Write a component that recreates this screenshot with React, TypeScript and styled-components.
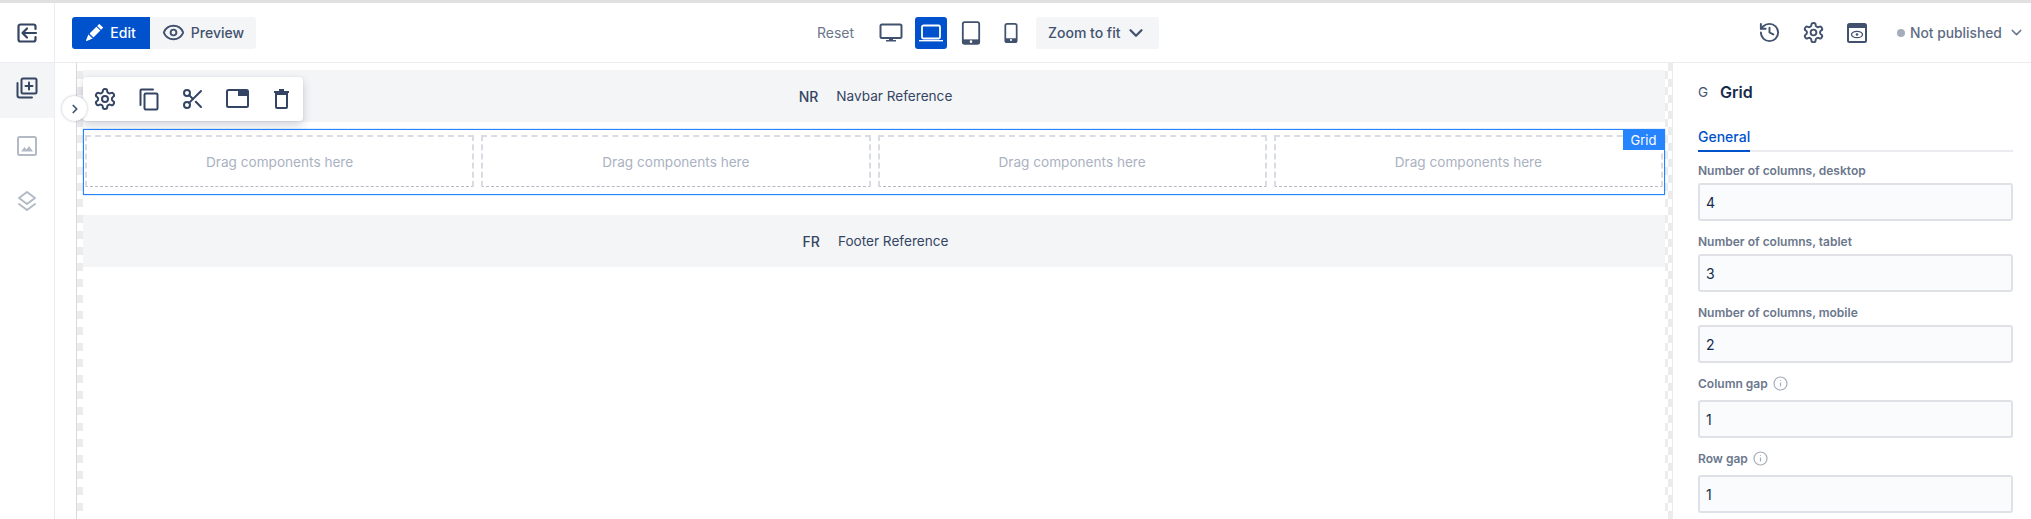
import { ReactNode } from "react";
import styled, { createGlobalStyle } from "styled-components";
import { BsPencilFill } from "react-icons/bs";
import { LuEye, LuHistory, LuScissors, LuSettings } from "react-icons/lu";
import { FiChevronDown, FiChevronRight } from "react-icons/fi";

const GlobalStyle = createGlobalStyle`
  html, body { margin: 0; padding: 0; height: 100%; background: #fff; overflow: hidden; }
  * { box-sizing: border-box; }
  body { font-family: Inter, "Liberation Sans", sans-serif; color: #344563; font-size: 14px; }
`;

const Page = styled.div`
  width: 2031px;
  height: 519px;
  display: flex;
  flex-direction: column;
  overflow: hidden;
  border-top: 3px solid #e0e0e0;
`;

const Body = styled.div`
  flex: 1;
  display: flex;
  min-height: 0;
`;

const Sidebar = styled.nav`
  width: 55px;
  flex-shrink: 0;
  border-right: 1px solid #ebecf0;
  display: flex;
  flex-direction: column;
`;

const SideItem = styled.div<{ $active?: boolean; $muted?: boolean; $tall?: boolean }>`
  height: ${(p) => (p.$tall ? "60px" : "55px")};
  display: flex;
  align-items: center;
  justify-content: center;
  padding-bottom: ${(p) => (p.$active ? "5px" : "0")};
  background: ${(p) => (p.$active ? "#f4f5f7" : "transparent")};
  color: ${(p) => (p.$muted ? "#b3bac5" : "#344563")};
  border-bottom: ${(p) => (p.$tall ? "1px solid #ebecf0" : "none")};
`;

const Main = styled.div`
  flex: 1;
  min-width: 0;
  display: flex;
  flex-direction: column;
`;

const Toolbar = styled.header`
  height: 60px;
  flex-shrink: 0;
  display: flex;
  align-items: center;
  padding-left: 17px;
  border-bottom: 1px solid #ebecf0;
  > * {
    flex-shrink: 0;
  }
`;

const ModeGroup = styled.div`
  display: flex;
  width: 184px;
  height: 32px;
  background: #f4f5f7;
  border-radius: 3px;
  overflow: hidden;
`;

const ModeButton = styled.div<{ $active?: boolean }>`
  width: ${(p) => (p.$active ? "78px" : "106px")};
  display: flex;
  align-items: center;
  justify-content: center;
  gap: ${(p) => (p.$active ? "7px" : "6px")};
  font-weight: 500;
  font-size: 14px;
  background: ${(p) => (p.$active ? "#0052cc" : "transparent")};
  color: ${(p) => (p.$active ? "#fff" : "#42526e")};
`;

const CenterGroup = styled.div`
  display: flex;
  align-items: center;
  margin-left: 561px;
`;

const ResetLabel = styled.span`
  color: #6b778c;
  font-size: 14px;
  width: 50px;
  margin-right: 8px;
`;

const DeviceButton = styled.div<{ $active?: boolean }>`
  width: 32px;
  height: 32px;
  margin-right: 8px;
  display: flex;
  align-items: center;
  justify-content: center;
  border-radius: 3px;
  background: ${(p) => (p.$active ? "#0052cc" : "transparent")};
  color: ${(p) => (p.$active ? "#fff" : "#42526e")};
`;

const ZoomSelect = styled.div`
  width: 123px;
  height: 32px;
  margin-left: 1px;
  background: #f4f5f7;
  border-radius: 3px;
  display: flex;
  align-items: center;
  gap: 4px;
  padding-left: 12px;
  font-weight: 500;
  color: #42526e;
`;

const RightGroup = styled.div`
  display: flex;
  align-items: center;
  margin-left: 588px;
  color: #42526e;
`;

const ToolIcon = styled.span`
  width: 44px;
  display: flex;
  align-items: center;
  justify-content: center;
`;

const StatusDot = styled.span`
  width: 8px;
  height: 8px;
  border-radius: 50%;
  background: #a5adba;
  margin: 0 5px 0 18px;
`;

const StatusText = styled.span`
  font-weight: 500;
  font-size: 13.8px;
  color: #5e6c84;
  margin-right: 6px;
  white-space: nowrap;
`;

const Workspace = styled.div`
  flex: 1;
  min-height: 0;
  display: flex;
`;

const Gutter = styled.div`
  width: 21px;
  flex-shrink: 0;
`;

const CanvasFrame = styled.div`
  position: relative;
  width: 1596px;
  flex-shrink: 0;
  padding: 0 7px;
  display: flex;
  flex-direction: column;
  box-shadow: inset 1px 0 #d5d8de;
  background: conic-gradient(#ececec 25%, #fff 0 50%, #ececec 0 75%, #fff 0) 0 0 / 16px 16px;
`;

const Canvas = styled.div`
  flex: 1;
  background: #fff;
  padding-top: 7px;
  display: flex;
  flex-direction: column;
`;

const ReferenceBar = styled.div<{ $gap: number }>`
  height: 52px;
  flex-shrink: 0;
  background: #f4f5f7;
  display: flex;
  align-items: center;
  justify-content: center;
  gap: ${(p) => p.$gap}px;
  padding-left: 3px;
  color: #344563;
  font-size: 13.6px;
`;

const Initials = styled.span`
  font-weight: 500;
  font-size: 14px;
`;

const GridBlock = styled.div`
  position: relative;
  margin: 7px 0 20px;
  height: 66px;
  padding: 5px 1px 7px 1px;
  border: 1px solid #2684ff;
  box-shadow: 0 0 1px #4c9aff;
  display: grid;
  grid-template-columns: repeat(4, 1fr);
  gap: 7px;
`;

const DropCell = styled.div`
  border-style: dashed;
  border-width: 2px 2px 1px;
  border-color: #d9dce3 #d9dce3 #b3bac5;
  display: flex;
  align-items: center;
  justify-content: center;
  color: #aab2bf;
  font-size: 13.6px;
`;

const GridBadge = styled.div`
  position: absolute;
  top: 0;
  right: 0;
  width: 41px;
  height: 20px;
  background: #2684ff;
  color: #fff;
  font-size: 13px;
  display: flex;
  align-items: center;
  justify-content: center;
`;

const FloatingTools = styled.div`
  position: absolute;
  top: 14px;
  left: 7px;
  width: 220px;
  height: 44px;
  background: #fff;
  border-radius: 3px;
  box-shadow: 0 4px 10px rgba(9, 30, 66, 0.2), 0 0 1px rgba(9, 30, 66, 0.2);
  display: grid;
  grid-template-columns: repeat(5, 1fr);
  align-items: center;
  justify-items: center;
  color: #344563;
  z-index: 2;
`;

const CollapseButton = styled.div`
  position: absolute;
  top: 33px;
  left: -14px;
  width: 25px;
  height: 25px;
  border-radius: 50%;
  background: #fff;
  box-shadow: 0 0 3px rgba(9, 30, 66, 0.3);
  display: flex;
  align-items: center;
  justify-content: center;
  color: #42526e;
  z-index: 3;
`;

const Inspector = styled.aside`
  flex: 1;
  min-width: 0;
  padding: 0 18px 0 25px;
  border-left: 1px solid #ebecf0;
`;

const InspectorHead = styled.div`
  height: 58px;
  display: flex;
  align-items: center;
  gap: 12px;
`;

const HeadLetter = styled.span`
  font-size: 13.5px;
  color: #42526e;
  width: 10px;
`;

const HeadTitle = styled.span`
  font-size: 16px;
  font-weight: 600;
  color: #172b4d;
`;

const TabRow = styled.div`
  height: 30px;
  border-bottom: 2px solid #ebecf0;
  display: flex;
  align-items: flex-start;
  margin-top: 1px;
  margin-bottom: 8px;
`;

const Tab = styled.div`
  color: #0052cc;
  font-weight: 500;
  font-size: 14px;
  height: 30px;
  padding-top: 6px;
  border-bottom: 2px solid #0052cc;
`;

const FieldLabel = styled.div<{ $info?: boolean }>`
  display: flex;
  align-items: center;
  gap: 5px;
  height: 20px;
  margin-bottom: ${(p) => (p.$info ? "7px" : "3px")};
  font-size: 12px;
  font-weight: 600;
  color: #6b778c;
`;

const Field = styled.div`
  margin-bottom: 10px;
`;

const ValueBox = styled.div`
  height: 38px;
  background: #fafbfc;
  border: 2px solid #dfe1e6;
  border-radius: 3px;
  display: flex;
  align-items: center;
  padding-left: 6px;
  font-size: 14px;
  color: #172b4d;
`;

const Svg = ({ size, children }: { size: number; children: ReactNode }) => (
  <svg
    width={size}
    height={size}
    viewBox="0 0 24 24"
    fill="none"
    stroke="currentColor"
    strokeWidth="2"
    strokeLinecap="round"
    strokeLinejoin="round"
  >
    {children}
  </svg>
);

const ExitIcon = () => (
  <Svg size={24}>
    <path d="M20.5 8V5.5a2 2 0 0 0-2-2h-13a2 2 0 0 0-2 2v13a2 2 0 0 0 2 2h13a2 2 0 0 0 2-2V16" strokeWidth="2.2" />
    <path d="M21 12H8M12 7.5 7.5 12l4.500 4.500" strokeWidth="2.2" />
  </Svg>
);

const AddBlockIcon = () => (
  <Svg size={24}>
    <rect x="6.500" y="2.500" width="15" height="15" rx="1.500" />
    <path d="M14 6.500v7M10.500 10h7" />
    <path d="M2.500 7v12.500a2 2 0 0 0 2 2H17" />
  </Svg>
);

const ImageIcon = () => (
  <svg width="24" height="24" viewBox="0 0 24 24">
    <rect x="3" y="3" width="18" height="18" rx="1.500" fill="none" stroke="currentColor" strokeWidth="2" />
    <path d="M6 17.500l3.500-4.500 2 2.500 2.500-3.500 4 5.500z" fill="currentColor" />
  </svg>
);

const LayersIcon = () => (
  <Svg size={24}>
    <path d="M12 3l8 6-8 6-8-6z" />
    <path d="M4 15l8 6 8-6" />
  </Svg>
);

const MonitorIcon = () => (
  <svg width="24" height="24" viewBox="0 0 24 24">
    <rect x="1.500" y="3.500" width="21" height="13.500" rx="1.500" fill="none" stroke="currentColor" strokeWidth="2" />
    <path d="M10 17h4v2h3v1.500H7V19h3z" fill="currentColor" />
  </svg>
);

const LaptopIcon = () => (
  <svg width="26" height="24" viewBox="0 0 26 24">
    <rect x="4" y="4.500" width="18" height="13" rx="1.500" fill="none" stroke="currentColor" strokeWidth="1.800" />
    <path d="M1 19h24v1.400H1z" fill="currentColor" />
  </svg>
);

const TabletIcon = () => (
  <svg width="20" height="26" viewBox="0 0 22 28">
    <rect x="2" y="2" width="18" height="24" rx="2" fill="none" stroke="currentColor" strokeWidth="2" />
    <path d="M2 21h18v5H2z" fill="currentColor" />
    <circle cx="11" cy="23.500" r="1.400" fill="#fff" />
  </svg>
);

const PhoneIcon = () => (
  <svg width="14" height="22" viewBox="0 0 16 24">
    <rect x="1.500" y="1.500" width="13" height="21" rx="2" fill="none" stroke="currentColor" strokeWidth="2" />
    <path d="M1.500 18h13v4.500h-13z" fill="currentColor" />
    <circle cx="8" cy="20" r="1.200" fill="#fff" />
  </svg>
);

const WindowEyeIcon = () => (
  <svg width="20" height="20" viewBox="0 0 20 20">
    <rect x="1" y="1" width="18" height="18" rx="1.500" fill="none" stroke="currentColor" strokeWidth="2" />
    <path d="M1 1h18v4H1z" fill="currentColor" />
    <ellipse cx="10" cy="11.500" rx="5.500" ry="3.200" fill="none" stroke="currentColor" strokeWidth="1.300" />
    <circle cx="10" cy="11.500" r="1.300" fill="currentColor" />
  </svg>
);

const CopyIcon = () => (
  <svg width="20" height="23" viewBox="0 0 20 23" fill="none" stroke="currentColor" strokeWidth="2" strokeLinecap="round">
    <path d="M14 1.500H2.500a1 1 0 0 0-1 1V17" />
    <rect x="5.500" y="5.500" width="13" height="16" rx="1.200" />
  </svg>
);

const PanelIcon = () => (
  <svg width="23" height="20" viewBox="0 0 23 20">
    <rect x="1" y="1" width="21" height="17" rx="1.500" fill="none" stroke="currentColor" strokeWidth="2" />
    <path d="M12 1h10v6H12z" fill="currentColor" />
  </svg>
);

const TrashIcon = () => (
  <svg width="17" height="20" viewBox="0 0 17 20" fill="none" stroke="currentColor" strokeWidth="2">
    <path d="M3 5h11v13a1 1 0 0 1-1 1H4a1 1 0 0 1-1-1z" />
    <path d="M1 3h15M6 1h5" />
  </svg>
);

const InfoIcon = () => (
  <svg width="15" height="15" viewBox="0 0 15 15" fill="none" stroke="#a5adba" strokeWidth="1.200">
    <circle cx="7.500" cy="7.500" r="6.500" />
    <path d="M7.500 6.500v4M7.500 4.200v.8" />
  </svg>
);

const fields = [
  { label: "Number of columns, desktop", value: "4" },
  { label: "Number of columns, tablet", value: "3" },
  { label: "Number of columns, mobile", value: "2" },
  { label: "Column gap", value: "1", info: true },
  { label: "Row gap", value: "1", info: true },
];

export default function App() {
  return (
    <>
      <GlobalStyle />
      <Page>
        <Body>
          <Sidebar>
            <SideItem $tall>
              <ExitIcon />
            </SideItem>
            <SideItem $active>
              <AddBlockIcon />
            </SideItem>
            <SideItem $muted>
              <ImageIcon />
            </SideItem>
            <SideItem $muted>
              <LayersIcon />
            </SideItem>
          </Sidebar>
          <Main>
            <Toolbar>
              <ModeGroup>
                <ModeButton $active>
                  <BsPencilFill size={17} />
                  Edit
                </ModeButton>
                <ModeButton>
                  <LuEye size={23} />
                  Preview
                </ModeButton>
              </ModeGroup>
              <CenterGroup>
                <ResetLabel>Reset</ResetLabel>
                <DeviceButton>
                  <MonitorIcon />
                </DeviceButton>
                <DeviceButton $active>
                  <LaptopIcon />
                </DeviceButton>
                <DeviceButton>
                  <TabletIcon />
                </DeviceButton>
                <DeviceButton>
                  <PhoneIcon />
                </DeviceButton>
                <ZoomSelect>
                  Zoom to fit
                  <FiChevronDown size={22} strokeWidth={2.5} />
                </ZoomSelect>
              </CenterGroup>
              <RightGroup>
                <ToolIcon>
                  <LuHistory size={23} />
                </ToolIcon>
                <ToolIcon>
                  <LuSettings size={23} />
                </ToolIcon>
                <ToolIcon>
                  <WindowEyeIcon />
                </ToolIcon>
                <StatusDot />
                <StatusText>Not published</StatusText>
                <FiChevronDown size={17} color="#6b778c" />
              </RightGroup>
            </Toolbar>
            <Workspace>
              <Gutter />
              <CanvasFrame>
                <CollapseButton>
                  <FiChevronRight size={14} strokeWidth={3} />
                </CollapseButton>
                <FloatingTools>
                  <LuSettings size={24} />
                  <CopyIcon />
                  <LuScissors size={24} />
                  <PanelIcon />
                  <TrashIcon />
                </FloatingTools>
                <Canvas>
                  <ReferenceBar $gap={18}>
                    <Initials>NR</Initials>
                    <span>Navbar Reference</span>
                  </ReferenceBar>
                  <GridBlock>
                    <GridBadge>Grid</GridBadge>
                    <DropCell>Drag components here</DropCell>
                    <DropCell>Drag components here</DropCell>
                    <DropCell>Drag components here</DropCell>
                    <DropCell>Drag components here</DropCell>
                  </GridBlock>
                  <ReferenceBar $gap={18}>
                    <Initials>FR</Initials>
                    <span>Footer Reference</span>
                  </ReferenceBar>
                </Canvas>
              </CanvasFrame>
              <Inspector>
                <InspectorHead>
                  <HeadLetter>G</HeadLetter>
                  <HeadTitle>Grid</HeadTitle>
                </InspectorHead>
                <TabRow>
                  <Tab>General</Tab>
                </TabRow>
                {fields.map((f) => (
                  <Field key={f.label}>
                    <FieldLabel $info={f.info}>
                      {f.label}
                      {f.info && <InfoIcon />}
                    </FieldLabel>
                    <ValueBox>{f.value}</ValueBox>
                  </Field>
                ))}
              </Inspector>
            </Workspace>
          </Main>
        </Body>
      </Page>
    </>
  );
}
